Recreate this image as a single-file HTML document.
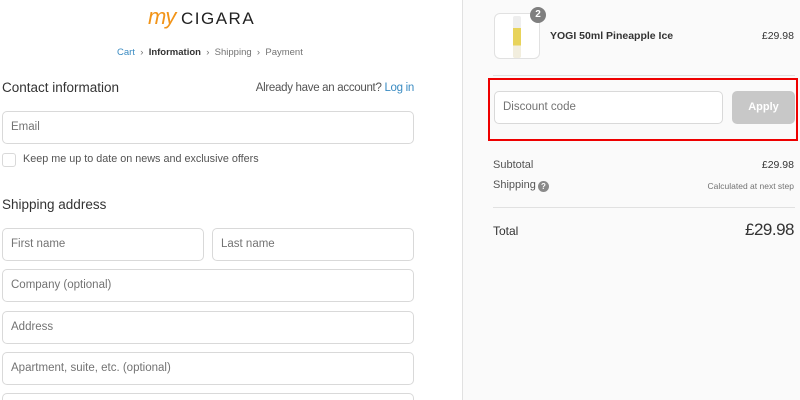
<!DOCTYPE html>
<html><head><meta charset="utf-8"><style>
*{box-sizing:border-box;margin:0;padding:0}
html,body{width:800px;height:400px;overflow:hidden}
body{background:#fff;font-family:"Liberation Sans",sans-serif;position:relative;color:#333}
.abs{position:absolute}
.right{left:462px;top:0;width:338px;height:400px;background:#fafafa;border-left:1px solid #e1e1e1}
.inp{position:absolute;border:1px solid #d9d9d9;border-radius:5px;background:#fff;height:33px;font-size:11.5px;color:#737373;padding:0 8px;line-height:31px}
.t{position:absolute;white-space:nowrap}
.r{position:absolute;white-space:nowrap;right:6px}
</style></head><body>
<div class="t" style="left:148px;top:4px;font-size:22px;color:#f29418;font-style:italic;letter-spacing:-1px">my</div>
<div class="t" style="left:181px;top:9px;font-size:17px;color:#222;letter-spacing:1.5px">CIGARA</div>
<div class="t" style="left:117px;top:47px;font-size:9.5px;color:#737373"><span style="color:#3a8bc2">Cart</span> &nbsp;›&nbsp; <b style="color:#333">Information</b> &nbsp;›&nbsp; Shipping &nbsp;›&nbsp; Payment</div>
<div class="t" style="left:2px;top:80px;font-size:13.5px;color:#333">Contact information</div>
<div class="t" style="right:386px;top:82px;font-size:11.5px;color:#545454;letter-spacing:-0.3px">Already have an account? <span style="color:#3a8bc2">Log in</span></div>
<div class="inp" style="left:2px;top:111px;width:412px">Email</div>
<div class="abs" style="left:2px;top:153px;width:14px;height:14px;border:1px solid #d9d9d9;border-radius:3px"></div>
<div class="t" style="left:23px;top:153px;font-size:10.8px;color:#545454">Keep me up to date on news and exclusive offers</div>
<div class="t" style="left:2px;top:197px;font-size:13.5px;color:#333">Shipping address</div>
<div class="inp" style="left:2px;top:228px;width:202px">First name</div>
<div class="inp" style="left:212px;top:228px;width:202px">Last name</div>
<div class="inp" style="left:2px;top:269px;width:412px">Company (optional)</div>
<div class="inp" style="left:2px;top:311px;width:412px">Address</div>
<div class="inp" style="left:2px;top:352px;width:412px">Apartment, suite, etc. (optional)</div>
<div class="abs" style="left:2px;top:393px;width:412px;height:7px;border:1px solid #d9d9d9;border-bottom:none;border-radius:5px 5px 0 0;background:#fff"></div>
<div class="abs right"></div>
<div class="abs" style="left:494px;top:13px;width:46px;height:46px;border:1px solid #e1e1e1;border-radius:6px;background:#fff"></div>
<div class="abs" style="left:513px;top:16px;width:8px;height:42px;background:linear-gradient(#eee 0 28%,#e8d35a 28% 70%,#f2eede 70%);border-radius:2px"></div>
<div class="abs" style="left:530px;top:7px;width:16px;height:16px;border-radius:50%;background:#7f7f7f;color:#fff;font-size:10px;font-weight:bold;text-align:center;line-height:16px">2</div>
<div class="t" style="left:550px;top:30px;font-size:10.5px;font-weight:bold;color:#333">YOGI 50ml Pineapple Ice</div>
<div class="r" style="top:30px;font-size:10.5px;color:#333">£29.98</div>
<div class="abs" style="left:493px;top:75px;width:302px;height:1px;background:#e1e1e1"></div>
<div class="abs" style="left:488px;top:78px;width:310px;height:63px;border:2px solid #e00"></div>
<div class="inp" style="left:494px;top:91px;width:229px;height:33px;line-height:31px">Discount code</div>
<div class="abs" style="left:732px;top:91px;width:63px;height:33px;border-radius:5px;background:#c8c8c8;color:#fff;font-size:11px;font-weight:bold;text-align:center;line-height:33px">Apply</div>
<div class="t" style="left:493px;top:159px;font-size:11px;color:#545454">Subtotal</div>
<div class="r" style="top:159px;font-size:10.5px;color:#333">£29.98</div>
<div class="t" style="left:493px;top:179px;font-size:11px;color:#545454">Shipping</div>
<div class="abs" style="left:538px;top:181px;width:11px;height:11px;border-radius:50%;background:#8a8a8a;color:#fff;font-size:8px;font-weight:bold;text-align:center;line-height:11px">?</div>
<div class="r" style="top:181px;font-size:8.5px;color:#737373">Calculated at next step</div>
<div class="abs" style="left:493px;top:207px;width:302px;height:1px;background:#e1e1e1"></div>
<div class="t" style="left:493px;top:224px;font-size:12px;color:#333">Total</div>
<div class="r" style="top:220px;font-size:17px;color:#333;letter-spacing:-0.5px">£29.98</div>
</body></html>
